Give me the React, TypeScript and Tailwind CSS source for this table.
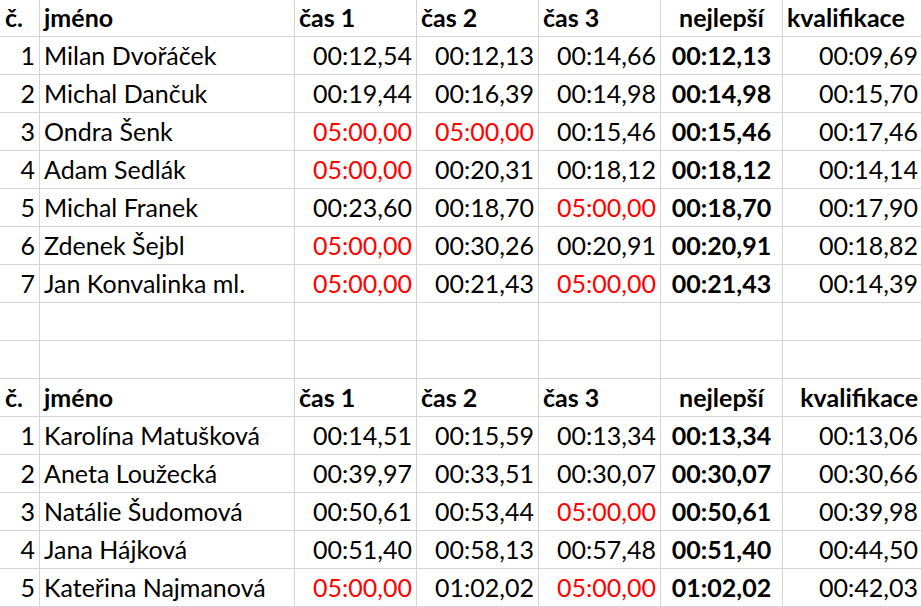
import React from "react";

type Row = {
  n: number;
  name: string;
  t: [string, string, string];
  best: string;
  kval: string;
};

const RED = "05:00,00";

const men: Row[] = [
  { n: 1, name: "Milan Dvořáček", t: ["00:12,54", "00:12,13", "00:14,66"], best: "00:12,13", kval: "00:09,69" },
  { n: 2, name: "Michal Dančuk", t: ["00:19,44", "00:16,39", "00:14,98"], best: "00:14,98", kval: "00:15,70" },
  { n: 3, name: "Ondra Šenk", t: [RED, RED, "00:15,46"], best: "00:15,46", kval: "00:17,46" },
  { n: 4, name: "Adam Sedlák", t: [RED, "00:20,31", "00:18,12"], best: "00:18,12", kval: "00:14,14" },
  { n: 5, name: "Michal Franek", t: ["00:23,60", "00:18,70", RED], best: "00:18,70", kval: "00:17,90" },
  { n: 6, name: "Zdenek Šejbl", t: [RED, "00:30,26", "00:20,91"], best: "00:20,91", kval: "00:18,82" },
  { n: 7, name: "Jan Konvalinka ml.", t: [RED, "00:21,43", RED], best: "00:21,43", kval: "00:14,39" },
];

const women: Row[] = [
  { n: 1, name: "Karolína Matušková", t: ["00:14,51", "00:15,59", "00:13,34"], best: "00:13,34", kval: "00:13,06" },
  { n: 2, name: "Aneta Loužecká", t: ["00:39,97", "00:33,51", "00:30,07"], best: "00:30,07", kval: "00:30,66" },
  { n: 3, name: "Natálie Šudomová", t: ["00:50,61", "00:53,44", RED], best: "00:50,61", kval: "00:39,98" },
  { n: 4, name: "Jana Hájková", t: ["00:51,40", "00:58,13", "00:57,48"], best: "00:51,40", kval: "00:44,50" },
  { n: 5, name: "Kateřina Najmanová", t: [RED, "01:02,02", RED], best: "01:02,02", kval: "00:42,03" },
];

const cell = "flex items-end pb-[6px] border-r border-b border-[#d4d4d4] leading-[25px] whitespace-nowrap overflow-hidden";
const rowH = "h-[38px]";

const Header = ({ first, right }: { first?: boolean; right?: boolean }) => {
  const h = first ? "h-[37px]" : rowH;
  return (
    <>
      <div className={`${cell} ${h} pl-[5px] font-bold`}>č.</div>
      <div className={`${cell} ${h} pl-[4px] font-bold`}>jméno</div>
      <div className={`${cell} ${h} pl-[4px] font-bold`}>čas 1</div>
      <div className={`${cell} ${h} pl-[4px] font-bold`}>čas 2</div>
      <div className={`${cell} ${h} pl-[4px] font-bold`}>čas 3</div>
      <div className={`${cell} ${h} justify-center font-bold`}>nejlepší</div>
      <div className={`${cell} ${h} font-bold ${right ? "justify-end pr-[4px]" : "pl-[4px]"}`}>kvalifikace</div>
    </>
  );
};

const DataRow = ({ r }: { r: Row }) => (
  <>
    <div className={`${cell} ${rowH} justify-end pr-[4px]`}>{r.n}</div>
    <div className={`${cell} ${rowH} pl-[4px]`}>{r.name}</div>
    {r.t.map((v, i) => (
      <div key={i} className={`${cell} ${rowH} justify-end pr-[4px] ${v === RED ? "text-[#ff0000]" : ""}`}>
        {v}
      </div>
    ))}
    <div className={`${cell} ${rowH} justify-center font-bold`}>{r.best}</div>
    <div className={`${cell} ${rowH} justify-end pr-[4px]`}>{r.kval}</div>
  </>
);

const EmptyRow = () => (
  <>
    {[0, 1, 2, 3, 4, 5, 6].map((i) => (
      <div key={i} className={`${cell} ${rowH}`} />
    ))}
  </>
);

export default function App() {
  return (
    <div className="w-[921px] h-[607px] overflow-hidden bg-white text-black font-['Lato',sans-serif] text-[25px]">
      <div className="grid grid-cols-[40px_255px_122px_122px_122px_122px_140px]">
        <Header first />
        {men.map((r) => (
          <DataRow key={r.n} r={r} />
        ))}
        <EmptyRow />
        <EmptyRow />
        <Header right />
        {women.map((r) => (
          <DataRow key={r.n} r={r} />
        ))}
      </div>
    </div>
  );
}
